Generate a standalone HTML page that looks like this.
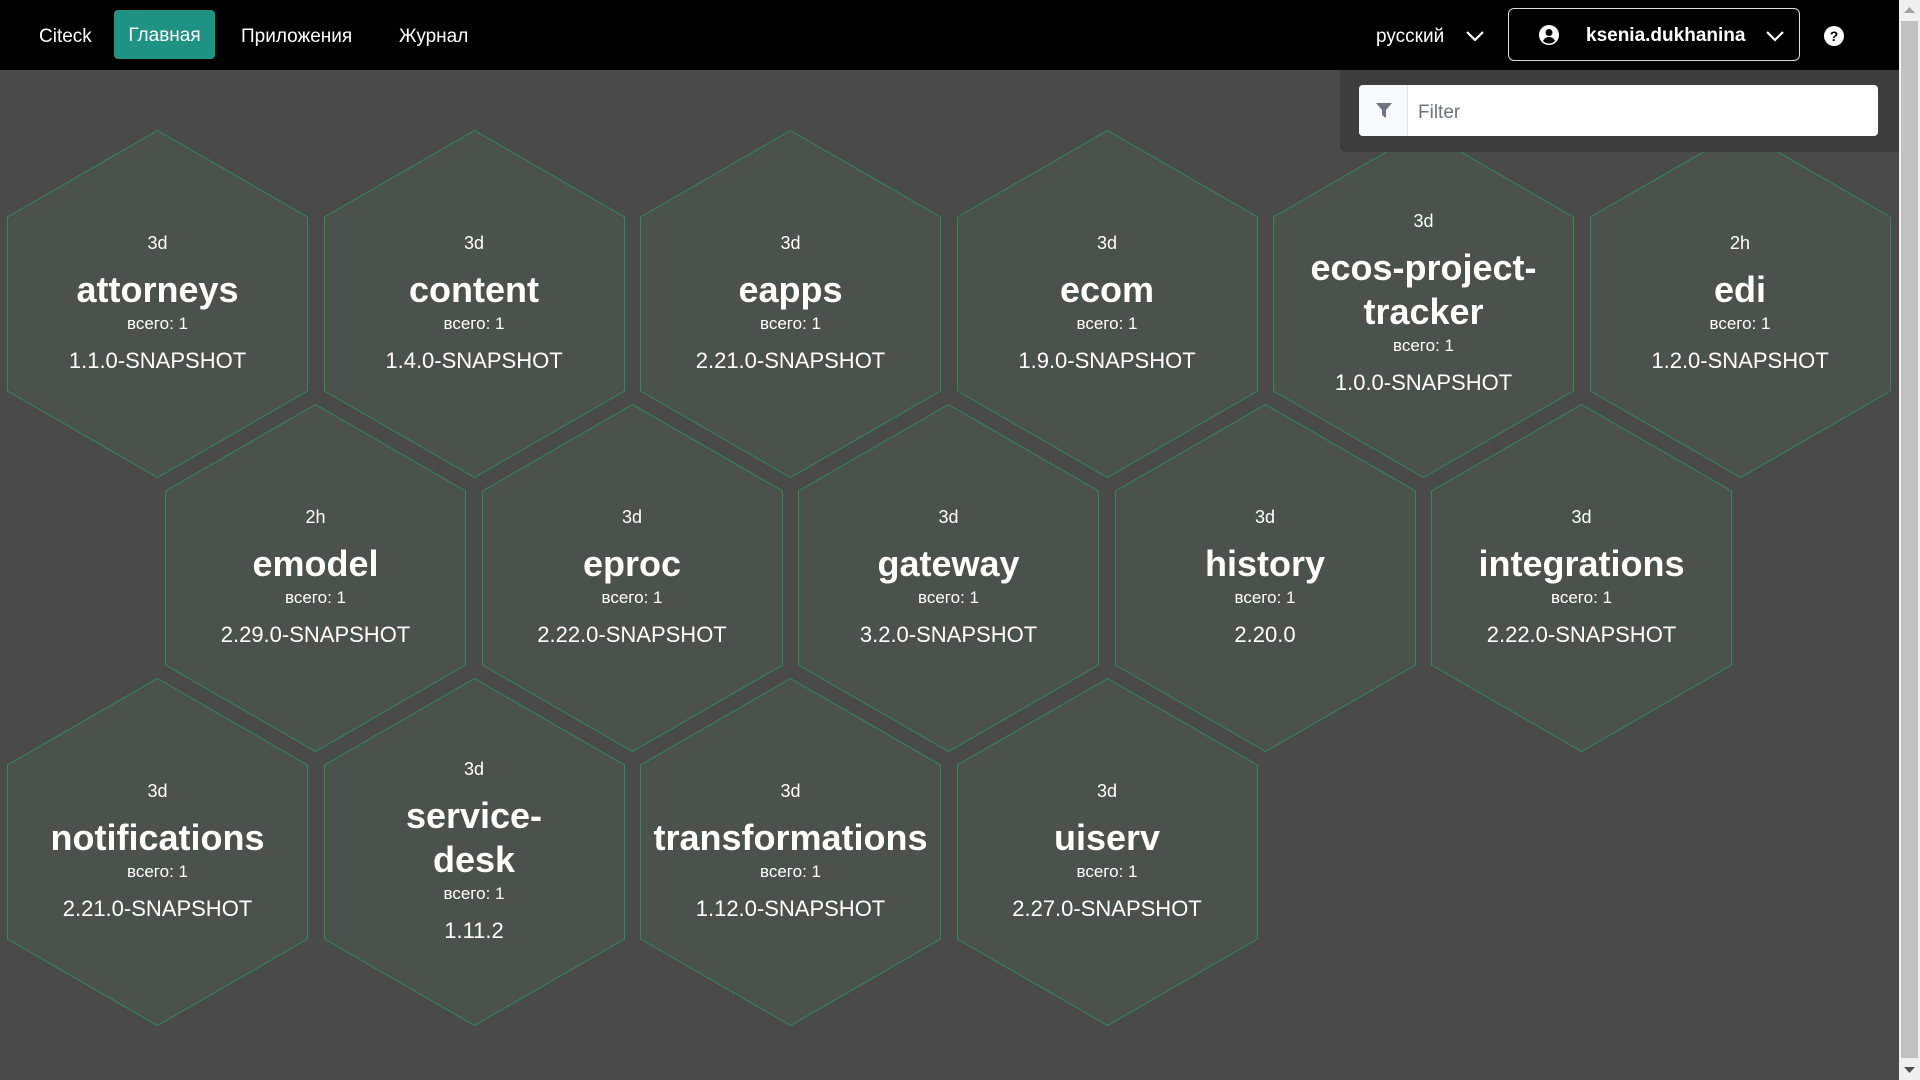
<!DOCTYPE html>
<html><head><meta charset="utf-8"><style>
*{box-sizing:border-box;margin:0;padding:0}
body{width:1920px;height:1080px;overflow:hidden;background:#4a4a4a;font-family:"Liberation Sans","DejaVu Sans",sans-serif;position:relative}
.hdr{position:absolute;left:0;top:0;width:1899px;height:70px;background:#000;color:#fff;font-size:19px;z-index:5}
.hdr .t{position:absolute;top:26px;line-height:22px}
.btn{position:absolute;left:114px;top:10px;width:101px;height:49px;background:#1e9384;border-radius:4px;text-align:center;line-height:51px}
.user{position:absolute;left:1508px;top:8px;width:292px;height:53px;border:1px solid #ddd;border-radius:6px}
.fp{position:absolute;left:1340px;top:70px;width:559px;height:82px;background:#3d3d3d;border-bottom-left-radius:6px;z-index:5}
.inp{position:absolute;left:19px;top:15px;width:519px;height:51px;background:#fff;border-radius:4px;overflow:hidden}
.add{position:absolute;left:0;top:0;width:49px;height:51px;background:#f8f9fa;border-right:1px solid #dee2e6}
.sb{position:absolute;left:1899px;top:0;width:21px;height:1080px;background:#f0f0f0}
.thumb{position:absolute;left:2px;top:21px;width:17px;height:1037px;background:#c1c1c1}
.hex{position:absolute;width:301px;height:348px}
.hex svg{position:absolute;left:0;top:0}
.in{position:absolute;left:0;top:0;width:301px;height:348px;display:flex;flex-direction:column;align-items:center;justify-content:center;color:#fff;text-align:center;padding-bottom:2px}
.a{font-size:18px;line-height:20px;margin-bottom:15px}
.n{font-size:36px;font-weight:bold;line-height:44px;white-space:nowrap}
.c{font-size:17px;line-height:20px;margin-top:2px}
.v{font-size:22px;line-height:26px;margin-top:14px}
</style></head><body>
<div class="hdr">
<div class="t" style="left:39px">Citeck</div>
<div class="btn">Главная</div>
<div class="t" style="left:241px">Приложения</div>
<div class="t" style="left:399px">Журнал</div>
<div class="t" style="left:1376px">русский</div>
<svg style="position:absolute;left:1465px;top:29px" width="20" height="14" viewBox="0 0 20 14"><path d="M2 3l8 8 8-8" stroke="#fff" stroke-width="2.2" fill="none"/></svg>
<div class="user">
<svg style="position:absolute;left:30px;top:16px" width="20" height="20" viewBox="0 0 20 20"><circle cx="10" cy="10" r="10" fill="#fff"/><circle cx="10" cy="7.5" r="3.5" fill="#000"/><path d="M4 16c1.5-3 3.5-4 6-4s4.5 1 6 4c-1.5 1.5-3.5 2.5-6 2.5s-4.5-1-6-2.5z" fill="#000"/></svg>
<div style="position:absolute;left:77px;top:16px;font-weight:bold;font-size:19px;line-height:22px">ksenia.dukhanina</div>
<svg style="position:absolute;left:256px;top:20px" width="20" height="14" viewBox="0 0 20 14"><path d="M2 3l8 8 8-8" stroke="#fff" stroke-width="2.2" fill="none"/></svg>
</div>
<svg style="position:absolute;left:1824px;top:26px" width="20" height="20" viewBox="0 0 20 20"><circle cx="10" cy="10" r="10" fill="#fff"/><text x="10" y="15" text-anchor="middle" font-family="Liberation Sans" font-weight="bold" font-size="14" fill="#000">?</text></svg>
</div>
<div class="fp"><div class="inp"><div class="add"><svg style="position:absolute;left:17px;top:18px" width="16" height="16" viewBox="0 0 16 16"><path d="M0 0h16l-6 7v8l-4-3V7z" fill="#6c757d"/></svg></div>
<div style="position:absolute;left:59px;top:17px;font-size:19px;color:#6c757d;line-height:22px">Filter</div></div></div>
<div class="sb"><div class="thumb"></div>
<svg style="position:absolute;left:5px;top:6px" width="11" height="7"><path d="M0 7L5.5 1 11 7z" fill="#a3a3a3"/></svg>
<svg style="position:absolute;left:5px;top:1067px" width="11" height="7"><path d="M0 0L5.5 6 11 0z" fill="#505050"/></svg></div>
<div id="hx"></div>
<script>
var d=[
["3d","attorneys","1.1.0-SNAPSHOT"],["3d","content","1.4.0-SNAPSHOT"],["3d","eapps","2.21.0-SNAPSHOT"],["3d","ecom","1.9.0-SNAPSHOT"],["3d","ecos-project-<br>tracker","1.0.0-SNAPSHOT"],["2h","edi","1.2.0-SNAPSHOT"],
["2h","emodel","2.29.0-SNAPSHOT"],["3d","eproc","2.22.0-SNAPSHOT"],["3d","gateway","3.2.0-SNAPSHOT"],["3d","history","2.20.0"],["3d","integrations","2.22.0-SNAPSHOT"],
["3d","notifications","2.21.0-SNAPSHOT"],["3d","service-<br>desk","1.11.2"],["3d","transformations","1.12.0-SNAPSHOT"],["3d","uiserv","2.27.0-SNAPSHOT"]];
var pos=[];for(var i=0;i<6;i++)pos.push([7+316.5*i,130]);for(i=0;i<5;i++)pos.push([165+316.5*i,404]);for(i=0;i<4;i++)pos.push([7+316.5*i,678]);
var h="";d.forEach(function(e,k){h+='<div class="hex" style="left:'+pos[k][0]+'px;top:'+pos[k][1]+'px"><svg width="301" height="348"><polygon points="150.5,0.5 300.5,87 300.5,261 150.5,347.5 0.5,261 0.5,87" fill="#4b514d" stroke="#2f8a57" stroke-width="1"/></svg><div class="in"><div class="a">'+e[0]+'</div><div class="n">'+e[1]+'</div><div class="c">всего: 1</div><div class="v">'+e[2]+'</div></div></div>'});
document.getElementById("hx").innerHTML=h;
</script>
</body></html>
